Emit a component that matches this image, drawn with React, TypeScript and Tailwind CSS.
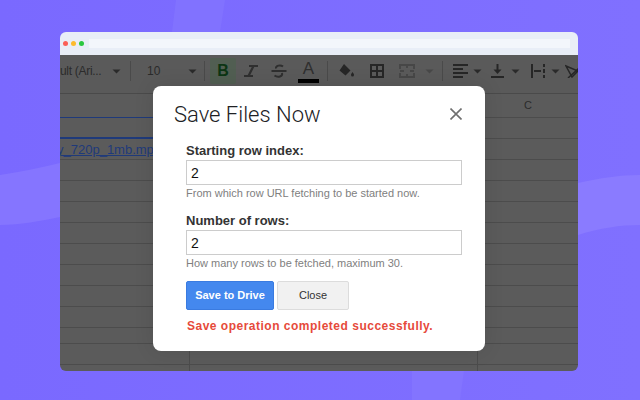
const rowHeights = [24, 21, 21, 21, 21, 21, 21, 21, 21, 21, 21, 16, 21, 7];

function Caret({ className = "fill-[#2a2a2a]" }: { className?: string }) {
  return (
    <svg width="9" height="5" viewBox="0 0 9 5" className={className + " shrink-0"}>
      <path d="M0.500 0.500h8L4.500 4.500z" />
    </svg>
  );
}

function Divider({ className }: { className: string }) {
  return <div className={"w-px h-[20px] shrink-0 bg-[#4a4a4a] " + className} />;
}

function Toolbar() {
  return (
    <div className="h-[39px] shrink-0 flex items-center pb-[6px] border-b border-[#4a4a4a] bg-[#5a5a5a] text-[#2b2b2b] font-['Liberation_Sans',sans-serif] overflow-hidden">
      <span className="w-[43px] shrink-0 overflow-hidden text-[12px] tracking-[-0.3px] whitespace-nowrap">ult (Ari...</span>
      <span className="ml-[9px] flex"><Caret /></span>
      <Divider className="ml-[9px]" />
      <span className="ml-[16px] w-[40px] shrink-0 text-[12px]">10</span>
      <span className="ml-[1px] flex"><Caret /></span>
      <Divider className="ml-[7px]" />
      <div className="ml-[5px] w-[26px] h-[26px] shrink-0 rounded-[2px] bg-[#515e52] flex items-center justify-center text-[16px] font-bold text-[#0c3514]">B</div>
      <svg className="ml-[7px] shrink-0" width="16" height="16" viewBox="0 0 16 16" fill="none" stroke="#2f2f2f" strokeWidth="2.200">
        <path d="M6 3h9M1 13h9M10.500 3 5.500 13" />
      </svg>
      <svg className="ml-[12px] shrink-0" width="16" height="16" viewBox="0 0 16 16" fill="none" stroke="#2f2f2f" strokeWidth="2">
        <path d="M12 3.500C9.500 1.500 4.500 2.500 5 5.500M0.500 8h15M11 10c1 3.500-4 5-7.500 2.500" />
      </svg>
      <div className="ml-[11px] w-[21px] shrink-0 flex flex-col items-center">
        <span className="text-[17px] leading-[18px] text-[#2f2f2f]">A</span>
        <div className="mt-px w-[21px] h-[4px] bg-black" />
      </div>
      <Divider className="ml-[8px]" />
      <svg className="ml-[11px] shrink-0" width="16" height="16" viewBox="0 0 16 16" fill="#262626">
        <path d="M5 1 11.500 7.500 6.500 12.500 0.500 7.500zM13.500 9c1 1.500 1.500 2 1.500 3a1.500 1.500 0 0 1-3 0c0-1 .5-1.500 1.500-3z" />
      </svg>
      <svg className="ml-[15px] shrink-0" width="14" height="14" viewBox="0 0 14 14" fill="none" stroke="#262626" strokeWidth="2">
        <path d="M1 1h12v12H1zM7 1v12M1 7h12" />
      </svg>
      <svg className="ml-[15px] shrink-0" width="16" height="14" viewBox="0 0 16 14" fill="none" stroke="#474747" strokeWidth="2">
        <path d="M1 5V1h14v4M1 9v4h14V9M1 7h4M11 7h4M8 1v3M8 10v3" />
      </svg>
      <span className="ml-[10px] flex"><Caret className="fill-[#484848]" /></span>
      <Divider className="ml-[8px]" />
      <svg className="ml-[10px] shrink-0" width="15" height="14" viewBox="0 0 15 14" fill="none" stroke="#262626" strokeWidth="2">
        <path d="M0 1h15M0 5h10M0 9h15M0 13h10" />
      </svg>
      <span className="ml-[5px] flex"><Caret /></span>
      <svg className="ml-[9px] shrink-0" width="13" height="14" viewBox="0 0 13 14" fill="none" stroke="#262626" strokeWidth="2">
        <path d="M0 13h13" />
        <path d="M6.500 0v7" />
        <path d="M2.500 5.500h8l-4 4.500z" fill="#262626" stroke="none" />
      </svg>
      <span className="ml-[7px] flex"><Caret /></span>
      <svg className="ml-[11px] shrink-0" width="14" height="14" viewBox="0 0 14 14" fill="none" stroke="#262626" strokeWidth="2">
        <path d="M1 0v14M13 0v3M13 5v4M13 11v3M3 7h7" />
      </svg>
      <span className="ml-[6px] flex"><Caret /></span>
      <svg className="ml-[5px] shrink-0" width="14" height="14" viewBox="0 0 14 14" fill="none" stroke="#262626" strokeWidth="1.500">
        <path d="M1 2 13 7 7 13zM3 14 14 4" />
      </svg>
    </div>
  );
}

function Sheet() {
  return (
    <div className="flex-1 bg-[#5b5b5b] overflow-hidden font-['Liberation_Sans',sans-serif]">
      {rowHeights.map((h, i) => (
        <div key={i} className="flex" style={{ height: h }}>
          <div
            className={
              "w-[130px] overflow-hidden border-r border-[#4c4c4c] " +
              (i === 0
                ? "border-b border-b-[#1f3a7a]"
                : i === 1
                  ? "border-b-2 border-b-[#1f3a7a]"
                  : "border-b border-b-[#4c4c4c]")
            }
          >
            {i === 2 && (
              <span className="block -ml-[3px] whitespace-nowrap text-[13px] leading-[21px] text-[#1f3a7a] underline">
                y_720p_1mb.mp4
              </span>
            )}
          </div>
          <div className="w-[288px] border-r border-b border-[#4c4c4c]" />
          <div className="flex-1 border-b border-[#4c4c4c] flex items-center justify-center text-[11px] text-[#2b2b2b]">
            {i === 0 ? "C" : ""}
          </div>
        </div>
      ))}
    </div>
  );
}

function Field({ label, hint }: { label: string; hint: string }) {
  return (
    <div>
      <label className="block text-[13px] leading-[16px] font-bold text-[#333333]">{label}</label>
      <input
        readOnly
        value="2"
        className="block mt-px w-[276px] h-[25px] border border-[#cccccc] px-[4px] text-[14px] text-[#111111] outline-none"
      />
      <p className="mt-[2px] text-[11px] leading-[13px] text-[#808080]">{hint}</p>
    </div>
  );
}

function Dialog() {
  return (
    <div className="absolute left-[153px] top-[86px] w-[332px] h-[265px] rounded-[8px] bg-white shadow-[0_0_20px_rgba(0,0,0,0.1)] font-['Liberation_Sans',sans-serif]">
      <div className="flex items-start justify-between pl-[21px] pr-[23px] pt-[15px]">
        <h1 className="font-['Roboto',sans-serif] text-[22px] leading-[28px] font-light text-[#202124]">Save Files Now</h1>
        <svg className="mt-[7px]" width="12" height="12" viewBox="0 0 12 12" stroke="#6f6f6f" strokeWidth="1.600" fill="none">
          <path d="M0.500 0.500 11.500 11.500M11.500 0.500 0.500 11.500" />
        </svg>
      </div>
      <div className="pl-[33px] mt-[14px] flex flex-col gap-[13px]">
        <Field label="Starting row index:" hint="From which row URL fetching to be started now." />
        <Field label="Number of rows:" hint="How many rows to be fetched, maximum 30." />
      </div>
      <div className="pl-[33px] mt-[11px] flex gap-[3px]">
        <button className="w-[88px] h-[29px] rounded-[2px] bg-[#4488ee] border border-[#3a7be0] text-white text-[11px] font-bold">Save to Drive</button>
        <button className="w-[72px] h-[29px] rounded-[2px] bg-[#f1f1f1] border border-[#dcdcdc] text-[#333333] text-[11px]">Close</button>
      </div>
      <p className="pl-[34px] mt-[9px] text-[12px] leading-[15px] font-bold text-[#e64a3b] tracking-[0.5px]">Save operation completed successfully.</p>
    </div>
  );
}

export default function App() {
  return (
    <div className="relative w-[640px] h-[400px] overflow-hidden bg-linear-to-r from-[#7a69ff] to-[#8070ff]">
      <svg className="absolute inset-0" width="640" height="400" viewBox="0 0 640 400">
        <path d="M0 175C20 172 40 168 60 163V217C40 221 20 225 0 225z" fill="#8575ff" />
        <path d="M578 183C600 178 620 175 640 175V225C620 225 600 228 578 235z" fill="#8a7bff" />
        <path d="M176 0 172 32H220L225 0z" fill="#8172ff" />
        <path d="M412 371V400H460L464 371z" fill="#8374ff" />
      </svg>
      <div className="absolute left-[60px] top-[32px] w-[518px] h-[339px] rounded-[6px] overflow-hidden flex flex-col">
        <div className="h-[23px] shrink-0 bg-[#e9eef7] flex items-center pl-[3px] gap-[3px]">
          <span className="w-[5px] h-[5px] rounded-full bg-[#fb5f57]" />
          <span className="w-[5px] h-[5px] rounded-full bg-[#fdbb2e]" />
          <span className="w-[5px] h-[5px] rounded-full bg-[#2bc840]" />
          <div className="ml-[2px] w-[481px] h-[9px] bg-[#f3f6fb]" />
        </div>
        <Toolbar />
        <Sheet />
      </div>
      <Dialog />
    </div>
  );
}
